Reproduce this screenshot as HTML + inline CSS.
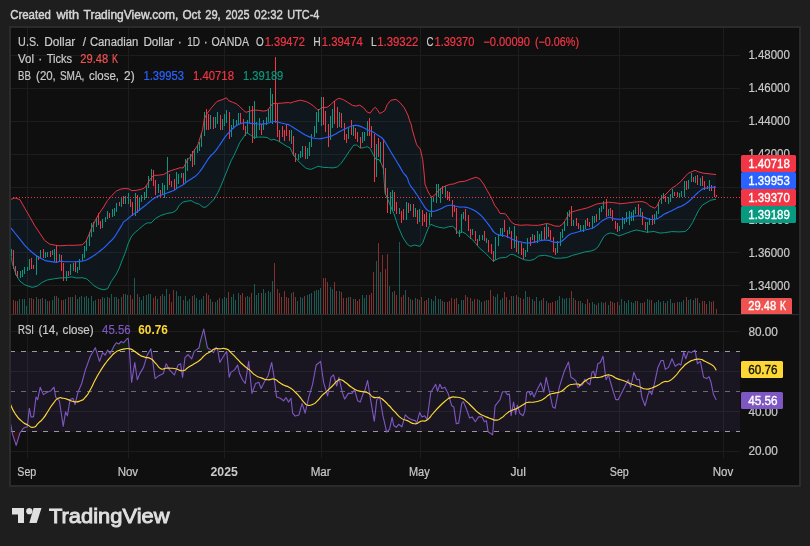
<!DOCTYPE html>
<html lang="en"><head><meta charset="utf-8"><title>USDCAD chart</title>
<style>html,body{margin:0;padding:0;background:#1e1e1e;overflow:hidden}svg{display:block;will-change:transform}</style></head>
<body>
<svg width="810" height="546" viewBox="0 0 810 546" font-family="'Liberation Sans', sans-serif" font-size="12">
<rect width="810" height="546" fill="#1e1e1e"/>
<rect x="9" y="26" width="792" height="461" fill="#2b2b2b"/>
<rect x="11" y="28" width="788" height="457" fill="#0f0f0f"/>
<g fill="#1d1d1d" shape-rendering="crispEdges">
<rect x="27" y="28" width="1" height="430"/>
<rect x="128" y="28" width="1" height="430"/>
<rect x="224" y="28" width="1" height="430"/>
<rect x="321" y="28" width="1" height="430"/>
<rect x="420" y="28" width="1" height="430"/>
<rect x="518" y="28" width="1" height="430"/>
<rect x="619" y="28" width="1" height="430"/>
<rect x="723" y="28" width="1" height="430"/>
<rect x="11" y="55" width="729" height="1"/>
<rect x="11" y="88" width="729" height="1"/>
<rect x="11" y="121" width="729" height="1"/>
<rect x="11" y="154" width="729" height="1"/>
<rect x="11" y="187" width="729" height="1"/>
<rect x="11" y="219" width="729" height="1"/>
<rect x="11" y="252" width="729" height="1"/>
<rect x="11" y="285" width="729" height="1"/>
<rect x="11" y="331" width="729" height="1"/>
<rect x="11" y="371" width="729" height="1"/>
<rect x="11" y="411" width="729" height="1"/>
<rect x="11" y="451" width="729" height="1"/>
</g>
<rect x="11" y="351.5" width="729" height="80" fill="#7e57c2" fill-opacity="0.1"/>
<path d="M10.0,199.6 L14.9,197.9 L19.9,199.6 L24.8,208.3 L29.8,216.9 L34.7,225.6 L39.7,233.0 L44.6,240.4 L49.6,244.1 L55.7,245.3 L60.0,245.8 L67.4,245.3 L74.8,245.3 L82.2,244.8 L86.0,241.3 L88.9,234.7 L91.9,227.2 L95.6,219.8 L99.3,213.2 L103.0,208.0 L107.4,200.6 L111.9,195.4 L116.3,191.0 L120.8,189.1 L125.2,188.5 L128.9,188.8 L131.9,190.7 L137.1,190.2 L141.5,189.2 L144.5,188.0 L147.5,183.9 L149.7,179.9 L151.9,176.9 L154.1,175.4 L159.3,175.1 L163.8,174.4 L167.5,172.1 L171.2,170.5 L175.6,169.2 L180.1,167.7 L183.1,168.0 L185.3,164.3 L187.5,159.8 L190.5,156.9 L192.7,153.2 L194.9,149.4 L197.9,145.0 L202.7,129.2 L204.3,118.6 L207.2,113.4 L211.7,107.4 L216.9,101.5 L222.1,99.7 L226.5,97.8 L228.8,100.8 L232.5,102.2 L236.2,103.7 L239.9,106.7 L243.6,110.4 L246.1,112.3 L250.3,110.9 L254.7,110.1 L259.2,110.4 L263.6,111.1 L267.3,110.4 L270.3,106.7 L272.5,103.7 L277.0,103.4 L282.9,103.0 L288.8,102.5 L290.0,103.1 L294.4,101.6 L300.4,100.2 L306.3,101.6 L310.8,103.9 L314.5,106.8 L318.2,110.5 L321.9,107.6 L327.1,107.3 L330.8,104.6 L334.5,100.9 L338.9,98.2 L343.4,99.7 L347.8,102.4 L352.3,105.3 L356.0,106.1 L359.7,105.1 L363.4,107.6 L367.1,112.0 L370.1,113.2 L373.1,109.1 L375.3,107.3 L377.5,109.8 L379.7,113.5 L382.7,112.0 L384.9,110.5 L387.2,104.6 L390.9,100.2 L396.1,99.4 L399.8,102.4 L404.2,107.6 L407.9,115.0 L410.0,121.7 L411.2,124.3 L412.3,130.0 L414.5,137.4 L416.7,144.8 L420.4,149.3 L422.7,159.7 L424.1,173.0 L425.0,184.0 L427.3,189.9 L429.5,194.4 L431.7,197.1 L434.7,195.1 L438.4,190.7 L442.1,187.7 L445.8,185.8 L450.3,184.3 L453.1,184.1 L459.0,181.9 L464.9,181.2 L470.9,178.9 L476.1,177.2 L479.8,178.9 L483.6,184.0 L487.3,190.7 L491.1,197.3 L494.8,205.5 L497.7,209.2 L500.0,213.4 L505.2,213.7 L508.2,217.4 L511.1,221.9 L514.8,224.4 L520.8,225.3 L526.7,224.9 L532.6,225.3 L538.6,225.3 L543.0,224.4 L546.7,223.4 L550.4,224.4 L554.9,226.0 L559.3,226.3 L562.3,224.4 L565.3,220.4 L568.2,215.2 L571.2,212.2 L575.6,210.8 L581.6,209.3 L587.5,207.8 L592.0,206.0 L596.4,204.1 L600.9,203.3 L603.8,203.1 L608.3,202.2 L612.7,202.6 L617.2,203.1 L619.1,203.5 L620.0,203.8 L627.4,203.0 L634.8,202.0 L642.2,201.5 L646.7,203.0 L649.7,206.0 L654.9,208.2 L657.1,206.0 L660.0,199.3 L664.5,195.6 L668.9,191.1 L671.9,188.2 L676.4,185.2 L680.8,181.5 L685.3,176.3 L688.2,173.3 L691.9,171.6 L694.9,170.4 L698.6,171.9 L703.1,173.1 L709.0,173.8 L715.7,174.5 L715.7,199.3 L710.5,200.3 L706.0,203.0 L702.3,205.2 L698.6,210.4 L695.6,216.4 L692.7,222.3 L689.0,228.2 L685.3,231.5 L679.3,231.9 L671.9,231.6 L664.5,232.7 L660.0,233.1 L654.1,231.5 L646.7,232.2 L640.8,230.9 L636.3,230.0 L631.9,231.2 L625.9,233.4 L620.0,235.6 L619.1,235.9 L614.2,233.8 L610.5,233.0 L606.8,234.2 L603.8,236.7 L600.9,241.9 L597.9,247.1 L594.9,249.6 L590.5,251.1 L584.5,252.0 L578.6,253.8 L572.7,255.3 L566.7,257.5 L560.8,258.2 L554.9,258.2 L550.4,256.4 L544.5,255.3 L538.6,256.0 L534.1,259.4 L529.7,260.5 L523.7,259.7 L517.8,256.7 L513.3,254.5 L510.4,254.5 L505.9,257.5 L500.0,257.9 L497.7,258.9 L493.3,261.1 L488.8,256.7 L484.4,252.2 L479.9,248.5 L475.5,243.3 L472.5,239.6 L469.5,237.4 L465.8,233.7 L462.1,231.8 L459.2,233.7 L456.9,231.5 L454.7,227.8 L452.5,226.3 L448.8,226.7 L444.3,228.1 L439.9,227.5 L435.4,226.3 L431.0,224.3 L428.8,227.0 L425.8,234.4 L422.8,242.6 L419.9,246.3 L414.7,245.1 L410.2,246.3 L407.2,244.1 L402.8,237.4 L398.3,227.0 L393.9,213.7 L389.4,203.3 L385.0,192.9 L383.4,169.1 L381.2,163.2 L379.0,159.5 L376.0,159.5 L373.1,154.3 L370.1,148.4 L367.1,146.6 L364.2,147.6 L360.5,148.1 L356.7,145.1 L353.8,145.1 L349.3,151.3 L344.9,158.0 L341.2,163.2 L337.5,166.9 L333.0,167.9 L328.6,167.6 L322.6,167.3 L318.2,166.2 L315.2,167.6 L310.8,169.4 L306.3,168.4 L301.9,164.7 L297.4,160.2 L293.0,154.3 L290.0,147.6 L287.3,146.7 L282.9,143.8 L278.4,141.1 L274.0,139.3 L271.0,140.1 L267.3,137.5 L262.9,137.1 L258.4,137.1 L254.0,137.5 L250.3,134.9 L246.6,132.7 L243.6,137.1 L239.9,142.3 L236.9,149.0 L233.9,155.6 L231.0,161.0 L220.0,188.0 L217.9,192.5 L214.2,199.1 L209.8,203.6 L206.1,207.0 L203.1,207.3 L199.4,204.3 L194.9,202.8 L191.2,200.6 L187.5,201.1 L183.1,202.1 L179.4,205.1 L176.4,210.3 L172.7,212.5 L166.7,213.5 L160.8,215.5 L155.6,218.4 L151.2,222.9 L147.5,222.9 L144.7,224.3 L138.6,229.5 L134.2,233.2 L131.2,236.9 L128.2,243.6 L125.3,252.5 L122.3,259.9 L119.3,268.0 L116.4,274.0 L111.9,280.6 L111.4,281.2 L107.7,288.6 L103.9,289.8 L99.0,288.6 L94.1,285.8 L90.4,282.1 L86.7,278.9 L82.2,277.7 L76.3,278.0 L71.9,276.9 L65.9,277.7 L60.0,278.0 L54.5,278.7 L47.1,280.0 L42.1,282.4 L37.2,286.1 L32.2,287.4 L24.8,284.9 L19.9,281.2 L16.2,275.0 L12.5,263.9 L10.0,250.3Z" fill="#2196f3" fill-opacity="0.06"/>
<rect x="11" y="314" width="788" height="1" fill="#2e2e2e" shape-rendering="crispEdges"/>
<clipPath id="cm"><rect x="11" y="28" width="729" height="286"/></clipPath>
<clipPath id="cr"><rect x="11" y="315" width="729" height="143"/></clipPath>
<g clip-path="url(#cm)" shape-rendering="crispEdges">
<g fill="#26a69a" fill-opacity="0.5"><rect x="10" y="300" width="1" height="14"/><rect x="19" y="299" width="1" height="15"/><rect x="22" y="299" width="1" height="15"/><rect x="24" y="299" width="1" height="15"/><rect x="26" y="306" width="1" height="8"/><rect x="29" y="298" width="1" height="16"/><rect x="36" y="297" width="1" height="17"/><rect x="40" y="299" width="1" height="15"/><rect x="45" y="299" width="1" height="15"/><rect x="47" y="301" width="1" height="13"/><rect x="52" y="300" width="1" height="14"/><rect x="54" y="296" width="1" height="18"/><rect x="58" y="298" width="1" height="16"/><rect x="65" y="299" width="1" height="15"/><rect x="70" y="297" width="1" height="17"/><rect x="72" y="297" width="1" height="17"/><rect x="77" y="299" width="1" height="15"/><rect x="79" y="297" width="1" height="17"/><rect x="81" y="296" width="1" height="18"/><rect x="84" y="297" width="1" height="17"/><rect x="86" y="296" width="1" height="18"/><rect x="88" y="298" width="1" height="16"/><rect x="91" y="296" width="1" height="18"/><rect x="93" y="301" width="1" height="13"/><rect x="95" y="300" width="1" height="14"/><rect x="102" y="297" width="1" height="17"/><rect x="104" y="298" width="1" height="16"/><rect x="107" y="297" width="1" height="17"/><rect x="111" y="294" width="1" height="20"/><rect x="114" y="297" width="1" height="17"/><rect x="116" y="297" width="1" height="17"/><rect x="121" y="297" width="1" height="17"/><rect x="125" y="294" width="1" height="20"/><rect x="127" y="295" width="1" height="19"/><rect x="134" y="278" width="1" height="36"/><rect x="139" y="297" width="1" height="17"/><rect x="141" y="300" width="1" height="14"/><rect x="143" y="296" width="1" height="18"/><rect x="146" y="295" width="1" height="19"/><rect x="148" y="294" width="1" height="20"/><rect x="150" y="294" width="1" height="20"/><rect x="157" y="299" width="1" height="15"/><rect x="162" y="294" width="1" height="20"/><rect x="164" y="296" width="1" height="18"/><rect x="166" y="289" width="1" height="25"/><rect x="176" y="291" width="1" height="23"/><rect x="178" y="296" width="1" height="18"/><rect x="180" y="296" width="1" height="18"/><rect x="185" y="296" width="1" height="18"/><rect x="187" y="301" width="1" height="13"/><rect x="189" y="299" width="1" height="15"/><rect x="194" y="295" width="1" height="19"/><rect x="196" y="298" width="1" height="16"/><rect x="199" y="300" width="1" height="14"/><rect x="201" y="299" width="1" height="15"/><rect x="203" y="296" width="1" height="18"/><rect x="210" y="299" width="1" height="15"/><rect x="215" y="302" width="1" height="12"/><rect x="217" y="300" width="1" height="14"/><rect x="222" y="299" width="1" height="15"/><rect x="224" y="297" width="1" height="17"/><rect x="226" y="298" width="1" height="16"/><rect x="231" y="297" width="1" height="17"/><rect x="233" y="294" width="1" height="20"/><rect x="235" y="300" width="1" height="14"/><rect x="238" y="293" width="1" height="21"/><rect x="247" y="296" width="1" height="18"/><rect x="249" y="297" width="1" height="17"/><rect x="254" y="284" width="1" height="30"/><rect x="256" y="295" width="1" height="19"/><rect x="258" y="293" width="1" height="21"/><rect x="263" y="289" width="1" height="25"/><rect x="265" y="293" width="1" height="21"/><rect x="268" y="291" width="1" height="23"/><rect x="270" y="292" width="1" height="22"/><rect x="272" y="281" width="1" height="33"/><rect x="291" y="293" width="1" height="21"/><rect x="297" y="301" width="1" height="13"/><rect x="300" y="297" width="1" height="17"/><rect x="302" y="298" width="1" height="16"/><rect x="307" y="295" width="1" height="19"/><rect x="309" y="294" width="1" height="20"/><rect x="311" y="293" width="1" height="21"/><rect x="314" y="291" width="1" height="23"/><rect x="316" y="290" width="1" height="24"/><rect x="318" y="290" width="1" height="24"/><rect x="320" y="288" width="1" height="26"/><rect x="330" y="287" width="1" height="27"/><rect x="332" y="289" width="1" height="25"/><rect x="339" y="291" width="1" height="23"/><rect x="348" y="297" width="1" height="17"/><rect x="353" y="299" width="1" height="15"/><rect x="362" y="295" width="1" height="19"/><rect x="364" y="298" width="1" height="16"/><rect x="366" y="295" width="1" height="19"/><rect x="376" y="261" width="1" height="53"/><rect x="380" y="272" width="1" height="42"/><rect x="389" y="286" width="1" height="28"/><rect x="392" y="292" width="1" height="22"/><rect x="399" y="242" width="1" height="72"/><rect x="405" y="290" width="1" height="24"/><rect x="410" y="299" width="1" height="15"/><rect x="415" y="298" width="1" height="16"/><rect x="419" y="300" width="1" height="14"/><rect x="428" y="298" width="1" height="16"/><rect x="431" y="299" width="1" height="15"/><rect x="433" y="301" width="1" height="13"/><rect x="435" y="296" width="1" height="18"/><rect x="438" y="299" width="1" height="15"/><rect x="440" y="299" width="1" height="15"/><rect x="444" y="302" width="1" height="12"/><rect x="458" y="304" width="1" height="10"/><rect x="461" y="300" width="1" height="14"/><rect x="463" y="300" width="1" height="14"/><rect x="472" y="301" width="1" height="13"/><rect x="479" y="300" width="1" height="14"/><rect x="481" y="302" width="1" height="12"/><rect x="486" y="300" width="1" height="14"/><rect x="495" y="297" width="1" height="17"/><rect x="497" y="294" width="1" height="20"/><rect x="500" y="300" width="1" height="14"/><rect x="502" y="298" width="1" height="16"/><rect x="509" y="300" width="1" height="14"/><rect x="513" y="296" width="1" height="18"/><rect x="518" y="297" width="1" height="17"/><rect x="525" y="291" width="1" height="23"/><rect x="527" y="297" width="1" height="17"/><rect x="532" y="299" width="1" height="15"/><rect x="536" y="297" width="1" height="17"/><rect x="539" y="301" width="1" height="13"/><rect x="541" y="300" width="1" height="14"/><rect x="546" y="301" width="1" height="13"/><rect x="557" y="300" width="1" height="14"/><rect x="559" y="296" width="1" height="18"/><rect x="562" y="298" width="1" height="16"/><rect x="564" y="299" width="1" height="15"/><rect x="566" y="298" width="1" height="16"/><rect x="569" y="298" width="1" height="16"/><rect x="573" y="298" width="1" height="16"/><rect x="580" y="301" width="1" height="13"/><rect x="582" y="303" width="1" height="11"/><rect x="585" y="304" width="1" height="10"/><rect x="592" y="302" width="1" height="12"/><rect x="594" y="304" width="1" height="10"/><rect x="598" y="303" width="1" height="11"/><rect x="601" y="302" width="1" height="12"/><rect x="603" y="303" width="1" height="11"/><rect x="608" y="305" width="1" height="9"/><rect x="619" y="305" width="1" height="9"/><rect x="621" y="299" width="1" height="15"/><rect x="624" y="301" width="1" height="13"/><rect x="626" y="303" width="1" height="11"/><rect x="628" y="300" width="1" height="14"/><rect x="631" y="302" width="1" height="12"/><rect x="633" y="303" width="1" height="11"/><rect x="635" y="301" width="1" height="13"/><rect x="640" y="303" width="1" height="11"/><rect x="647" y="299" width="1" height="15"/><rect x="649" y="300" width="1" height="14"/><rect x="654" y="303" width="1" height="11"/><rect x="656" y="302" width="1" height="12"/><rect x="658" y="300" width="1" height="14"/><rect x="660" y="302" width="1" height="12"/><rect x="663" y="301" width="1" height="13"/><rect x="667" y="301" width="1" height="13"/><rect x="670" y="299" width="1" height="15"/><rect x="672" y="303" width="1" height="11"/><rect x="679" y="302" width="1" height="12"/><rect x="681" y="302" width="1" height="12"/><rect x="683" y="300" width="1" height="14"/><rect x="688" y="300" width="1" height="14"/><rect x="690" y="299" width="1" height="15"/><rect x="695" y="298" width="1" height="16"/><rect x="699" y="303" width="1" height="11"/><rect x="709" y="301" width="1" height="13"/></g>
<g fill="#ef5350" fill-opacity="0.5"><rect x="13" y="300" width="1" height="14"/><rect x="15" y="301" width="1" height="13"/><rect x="17" y="301" width="1" height="13"/><rect x="31" y="298" width="1" height="16"/><rect x="33" y="299" width="1" height="15"/><rect x="38" y="299" width="1" height="15"/><rect x="42" y="298" width="1" height="16"/><rect x="49" y="301" width="1" height="13"/><rect x="56" y="296" width="1" height="18"/><rect x="61" y="300" width="1" height="14"/><rect x="63" y="300" width="1" height="14"/><rect x="68" y="297" width="1" height="17"/><rect x="75" y="295" width="1" height="19"/><rect x="98" y="299" width="1" height="15"/><rect x="100" y="299" width="1" height="15"/><rect x="109" y="298" width="1" height="16"/><rect x="118" y="299" width="1" height="15"/><rect x="123" y="294" width="1" height="20"/><rect x="130" y="295" width="1" height="19"/><rect x="132" y="299" width="1" height="15"/><rect x="137" y="294" width="1" height="20"/><rect x="153" y="298" width="1" height="16"/><rect x="155" y="296" width="1" height="18"/><rect x="160" y="296" width="1" height="18"/><rect x="169" y="294" width="1" height="20"/><rect x="171" y="302" width="1" height="12"/><rect x="173" y="290" width="1" height="24"/><rect x="183" y="300" width="1" height="14"/><rect x="192" y="296" width="1" height="18"/><rect x="206" y="293" width="1" height="21"/><rect x="208" y="295" width="1" height="19"/><rect x="212" y="302" width="1" height="12"/><rect x="219" y="298" width="1" height="16"/><rect x="228" y="292" width="1" height="22"/><rect x="240" y="295" width="1" height="19"/><rect x="242" y="293" width="1" height="21"/><rect x="245" y="297" width="1" height="17"/><rect x="251" y="293" width="1" height="21"/><rect x="261" y="293" width="1" height="21"/><rect x="274" y="263" width="1" height="51"/><rect x="277" y="289" width="1" height="25"/><rect x="279" y="293" width="1" height="21"/><rect x="281" y="297" width="1" height="17"/><rect x="284" y="291" width="1" height="23"/><rect x="286" y="297" width="1" height="17"/><rect x="288" y="298" width="1" height="16"/><rect x="293" y="292" width="1" height="22"/><rect x="295" y="297" width="1" height="17"/><rect x="304" y="296" width="1" height="18"/><rect x="323" y="278" width="1" height="36"/><rect x="325" y="278" width="1" height="36"/><rect x="327" y="282" width="1" height="32"/><rect x="334" y="282" width="1" height="32"/><rect x="336" y="291" width="1" height="23"/><rect x="341" y="292" width="1" height="22"/><rect x="343" y="298" width="1" height="16"/><rect x="346" y="298" width="1" height="16"/><rect x="350" y="297" width="1" height="17"/><rect x="355" y="299" width="1" height="15"/><rect x="357" y="301" width="1" height="13"/><rect x="359" y="299" width="1" height="15"/><rect x="369" y="295" width="1" height="19"/><rect x="371" y="293" width="1" height="21"/><rect x="373" y="272" width="1" height="42"/><rect x="378" y="243" width="1" height="71"/><rect x="382" y="255" width="1" height="59"/><rect x="385" y="269" width="1" height="45"/><rect x="387" y="254" width="1" height="60"/><rect x="394" y="291" width="1" height="23"/><rect x="396" y="295" width="1" height="19"/><rect x="401" y="297" width="1" height="17"/><rect x="403" y="295" width="1" height="19"/><rect x="408" y="297" width="1" height="17"/><rect x="412" y="300" width="1" height="14"/><rect x="417" y="299" width="1" height="15"/><rect x="421" y="297" width="1" height="17"/><rect x="424" y="301" width="1" height="13"/><rect x="426" y="300" width="1" height="14"/><rect x="442" y="301" width="1" height="13"/><rect x="447" y="302" width="1" height="12"/><rect x="449" y="301" width="1" height="13"/><rect x="451" y="298" width="1" height="16"/><rect x="454" y="299" width="1" height="15"/><rect x="456" y="298" width="1" height="16"/><rect x="465" y="295" width="1" height="19"/><rect x="467" y="297" width="1" height="17"/><rect x="470" y="298" width="1" height="16"/><rect x="474" y="299" width="1" height="15"/><rect x="477" y="299" width="1" height="15"/><rect x="484" y="301" width="1" height="13"/><rect x="488" y="300" width="1" height="14"/><rect x="490" y="290" width="1" height="24"/><rect x="493" y="296" width="1" height="18"/><rect x="504" y="292" width="1" height="22"/><rect x="506" y="297" width="1" height="17"/><rect x="511" y="296" width="1" height="18"/><rect x="516" y="295" width="1" height="19"/><rect x="520" y="298" width="1" height="16"/><rect x="523" y="299" width="1" height="15"/><rect x="529" y="297" width="1" height="17"/><rect x="534" y="301" width="1" height="13"/><rect x="543" y="298" width="1" height="16"/><rect x="548" y="303" width="1" height="11"/><rect x="550" y="303" width="1" height="11"/><rect x="552" y="302" width="1" height="12"/><rect x="555" y="301" width="1" height="13"/><rect x="571" y="291" width="1" height="23"/><rect x="575" y="300" width="1" height="14"/><rect x="578" y="301" width="1" height="13"/><rect x="587" y="299" width="1" height="15"/><rect x="589" y="303" width="1" height="11"/><rect x="596" y="305" width="1" height="9"/><rect x="605" y="302" width="1" height="12"/><rect x="610" y="301" width="1" height="13"/><rect x="612" y="302" width="1" height="12"/><rect x="614" y="303" width="1" height="11"/><rect x="617" y="302" width="1" height="12"/><rect x="637" y="301" width="1" height="13"/><rect x="642" y="303" width="1" height="11"/><rect x="644" y="302" width="1" height="12"/><rect x="651" y="300" width="1" height="14"/><rect x="665" y="303" width="1" height="11"/><rect x="674" y="303" width="1" height="11"/><rect x="677" y="302" width="1" height="12"/><rect x="686" y="297" width="1" height="17"/><rect x="693" y="300" width="1" height="14"/><rect x="697" y="298" width="1" height="16"/><rect x="702" y="301" width="1" height="13"/><rect x="704" y="301" width="1" height="13"/><rect x="706" y="304" width="1" height="10"/><rect x="711" y="302" width="1" height="12"/><rect x="713" y="301" width="1" height="13"/><rect x="716" y="309" width="1" height="5"/></g>
<g fill="#089981"><rect x="11" y="249" width="1" height="7"/><rect x="20" y="271" width="1" height="7"/><rect x="22" y="270" width="1" height="7"/><rect x="24" y="267" width="1" height="7"/><rect x="27" y="267" width="1" height="4"/><rect x="29" y="259" width="1" height="11"/><rect x="36" y="255" width="1" height="20"/><rect x="40" y="250" width="1" height="8"/><rect x="45" y="252" width="1" height="6"/><rect x="47" y="252" width="1" height="5"/><rect x="52" y="250" width="1" height="5"/><rect x="54" y="249" width="1" height="13"/><rect x="59" y="254" width="1" height="7"/><rect x="66" y="271" width="1" height="10"/><rect x="70" y="264" width="1" height="11"/><rect x="73" y="263" width="1" height="8"/><rect x="77" y="267" width="1" height="6"/><rect x="79" y="259" width="1" height="11"/><rect x="82" y="254" width="1" height="7"/><rect x="84" y="246" width="1" height="12"/><rect x="86" y="240" width="1" height="11"/><rect x="89" y="232" width="1" height="14"/><rect x="91" y="223" width="1" height="14"/><rect x="93" y="222" width="1" height="10"/><rect x="96" y="218" width="1" height="9"/><rect x="102" y="219" width="1" height="9"/><rect x="105" y="217" width="1" height="5"/><rect x="107" y="211" width="1" height="8"/><rect x="112" y="209" width="1" height="8"/><rect x="114" y="208" width="1" height="8"/><rect x="116" y="203" width="1" height="9"/><rect x="121" y="198" width="1" height="9"/><rect x="125" y="196" width="1" height="8"/><rect x="128" y="193" width="1" height="11"/><rect x="135" y="193" width="1" height="23"/><rect x="139" y="198" width="1" height="13"/><rect x="141" y="195" width="1" height="7"/><rect x="144" y="192" width="1" height="8"/><rect x="146" y="186" width="1" height="12"/><rect x="148" y="176" width="1" height="12"/><rect x="151" y="169" width="1" height="12"/><rect x="158" y="184" width="1" height="9"/><rect x="162" y="183" width="1" height="11"/><rect x="164" y="185" width="1" height="13"/><rect x="167" y="157" width="1" height="33"/><rect x="176" y="172" width="1" height="17"/><rect x="178" y="174" width="1" height="10"/><rect x="181" y="173" width="1" height="5"/><rect x="185" y="159" width="1" height="24"/><rect x="187" y="158" width="1" height="13"/><rect x="190" y="154" width="1" height="7"/><rect x="194" y="149" width="1" height="16"/><rect x="197" y="145" width="1" height="8"/><rect x="199" y="142" width="1" height="9"/><rect x="201" y="133" width="1" height="14"/><rect x="204" y="112" width="1" height="24"/><rect x="210" y="115" width="1" height="14"/><rect x="215" y="117" width="1" height="11"/><rect x="217" y="112" width="1" height="12"/><rect x="222" y="119" width="1" height="11"/><rect x="224" y="114" width="1" height="12"/><rect x="226" y="110" width="1" height="13"/><rect x="231" y="125" width="1" height="12"/><rect x="233" y="119" width="1" height="10"/><rect x="236" y="120" width="1" height="6"/><rect x="238" y="113" width="1" height="11"/><rect x="247" y="120" width="1" height="13"/><rect x="249" y="106" width="1" height="17"/><rect x="254" y="101" width="1" height="38"/><rect x="256" y="122" width="1" height="15"/><rect x="259" y="118" width="1" height="12"/><rect x="263" y="120" width="1" height="10"/><rect x="266" y="117" width="1" height="8"/><rect x="268" y="109" width="1" height="13"/><rect x="270" y="88" width="1" height="34"/><rect x="272" y="94" width="1" height="30"/><rect x="291" y="130" width="1" height="14"/><rect x="298" y="154" width="1" height="6"/><rect x="300" y="151" width="1" height="7"/><rect x="302" y="146" width="1" height="11"/><rect x="307" y="148" width="1" height="11"/><rect x="309" y="142" width="1" height="14"/><rect x="311" y="134" width="1" height="13"/><rect x="314" y="126" width="1" height="11"/><rect x="316" y="112" width="1" height="21"/><rect x="318" y="109" width="1" height="13"/><rect x="321" y="97" width="1" height="29"/><rect x="330" y="116" width="1" height="24"/><rect x="332" y="109" width="1" height="19"/><rect x="339" y="112" width="1" height="15"/><rect x="348" y="128" width="1" height="11"/><rect x="353" y="125" width="1" height="11"/><rect x="362" y="132" width="1" height="11"/><rect x="364" y="132" width="1" height="9"/><rect x="367" y="121" width="1" height="15"/><rect x="376" y="144" width="1" height="33"/><rect x="380" y="142" width="1" height="21"/><rect x="390" y="192" width="1" height="22"/><rect x="392" y="190" width="1" height="21"/><rect x="399" y="208" width="1" height="6"/><rect x="406" y="202" width="1" height="18"/><rect x="410" y="204" width="1" height="7"/><rect x="415" y="208" width="1" height="9"/><rect x="419" y="209" width="1" height="13"/><rect x="429" y="213" width="1" height="12"/><rect x="431" y="197" width="1" height="20"/><rect x="433" y="197" width="1" height="5"/><rect x="436" y="184" width="1" height="19"/><rect x="438" y="184" width="1" height="13"/><rect x="440" y="188" width="1" height="15"/><rect x="445" y="186" width="1" height="11"/><rect x="459" y="230" width="1" height="7"/><rect x="461" y="214" width="1" height="19"/><rect x="463" y="212" width="1" height="7"/><rect x="472" y="229" width="1" height="6"/><rect x="479" y="235" width="1" height="6"/><rect x="482" y="235" width="1" height="5"/><rect x="486" y="238" width="1" height="5"/><rect x="495" y="237" width="1" height="23"/><rect x="498" y="234" width="1" height="12"/><rect x="500" y="228" width="1" height="7"/><rect x="502" y="228" width="1" height="9"/><rect x="509" y="227" width="1" height="7"/><rect x="514" y="226" width="1" height="22"/><rect x="518" y="241" width="1" height="13"/><rect x="525" y="250" width="1" height="7"/><rect x="527" y="238" width="1" height="14"/><rect x="532" y="234" width="1" height="6"/><rect x="537" y="231" width="1" height="12"/><rect x="539" y="234" width="1" height="6"/><rect x="541" y="231" width="1" height="9"/><rect x="546" y="224" width="1" height="15"/><rect x="557" y="241" width="1" height="12"/><rect x="560" y="232" width="1" height="14"/><rect x="562" y="229" width="1" height="9"/><rect x="564" y="221" width="1" height="10"/><rect x="567" y="212" width="1" height="14"/><rect x="569" y="210" width="1" height="7"/><rect x="573" y="220" width="1" height="6"/><rect x="580" y="225" width="1" height="6"/><rect x="583" y="225" width="1" height="7"/><rect x="585" y="220" width="1" height="9"/><rect x="592" y="216" width="1" height="13"/><rect x="594" y="216" width="1" height="7"/><rect x="599" y="208" width="1" height="12"/><rect x="601" y="206" width="1" height="6"/><rect x="603" y="201" width="1" height="8"/><rect x="608" y="209" width="1" height="7"/><rect x="619" y="226" width="1" height="5"/><rect x="622" y="217" width="1" height="12"/><rect x="624" y="219" width="1" height="5"/><rect x="626" y="212" width="1" height="10"/><rect x="629" y="211" width="1" height="14"/><rect x="631" y="212" width="1" height="9"/><rect x="633" y="210" width="1" height="11"/><rect x="635" y="207" width="1" height="7"/><rect x="640" y="208" width="1" height="8"/><rect x="647" y="222" width="1" height="11"/><rect x="649" y="218" width="1" height="7"/><rect x="654" y="214" width="1" height="10"/><rect x="656" y="211" width="1" height="8"/><rect x="658" y="202" width="1" height="12"/><rect x="661" y="195" width="1" height="9"/><rect x="663" y="193" width="1" height="6"/><rect x="668" y="197" width="1" height="7"/><rect x="670" y="194" width="1" height="8"/><rect x="672" y="189" width="1" height="9"/><rect x="679" y="193" width="1" height="5"/><rect x="681" y="191" width="1" height="6"/><rect x="684" y="181" width="1" height="16"/><rect x="688" y="180" width="1" height="9"/><rect x="691" y="173" width="1" height="9"/><rect x="695" y="176" width="1" height="7"/><rect x="700" y="178" width="1" height="8"/><rect x="709" y="180" width="1" height="11"/></g>
<g fill="#f23645"><rect x="13" y="250" width="1" height="19"/><rect x="15" y="266" width="1" height="9"/><rect x="17" y="271" width="1" height="7"/><rect x="31" y="258" width="1" height="11"/><rect x="33" y="265" width="1" height="4"/><rect x="38" y="256" width="1" height="4"/><rect x="43" y="249" width="1" height="9"/><rect x="50" y="251" width="1" height="6"/><rect x="56" y="245" width="1" height="18"/><rect x="61" y="255" width="1" height="16"/><rect x="63" y="263" width="1" height="18"/><rect x="68" y="271" width="1" height="5"/><rect x="75" y="262" width="1" height="10"/><rect x="98" y="213" width="1" height="12"/><rect x="100" y="221" width="1" height="8"/><rect x="109" y="213" width="1" height="5"/><rect x="119" y="202" width="1" height="4"/><rect x="123" y="196" width="1" height="8"/><rect x="130" y="199" width="1" height="8"/><rect x="132" y="202" width="1" height="14"/><rect x="137" y="195" width="1" height="18"/><rect x="153" y="170" width="1" height="16"/><rect x="155" y="180" width="1" height="15"/><rect x="160" y="190" width="1" height="8"/><rect x="169" y="174" width="1" height="11"/><rect x="171" y="181" width="1" height="6"/><rect x="174" y="179" width="1" height="11"/><rect x="183" y="173" width="1" height="12"/><rect x="192" y="151" width="1" height="16"/><rect x="206" y="109" width="1" height="21"/><rect x="208" y="114" width="1" height="16"/><rect x="213" y="117" width="1" height="12"/><rect x="220" y="115" width="1" height="15"/><rect x="229" y="112" width="1" height="27"/><rect x="240" y="113" width="1" height="11"/><rect x="243" y="119" width="1" height="11"/><rect x="245" y="126" width="1" height="10"/><rect x="252" y="106" width="1" height="37"/><rect x="261" y="124" width="1" height="11"/><rect x="275" y="57" width="1" height="66"/><rect x="277" y="104" width="1" height="33"/><rect x="279" y="130" width="1" height="12"/><rect x="282" y="126" width="1" height="11"/><rect x="284" y="130" width="1" height="11"/><rect x="286" y="124" width="1" height="12"/><rect x="289" y="130" width="1" height="11"/><rect x="293" y="136" width="1" height="20"/><rect x="295" y="153" width="1" height="9"/><rect x="305" y="146" width="1" height="13"/><rect x="323" y="97" width="1" height="28"/><rect x="325" y="111" width="1" height="21"/><rect x="328" y="124" width="1" height="23"/><rect x="334" y="101" width="1" height="23"/><rect x="337" y="107" width="1" height="21"/><rect x="341" y="113" width="1" height="15"/><rect x="344" y="123" width="1" height="17"/><rect x="346" y="134" width="1" height="9"/><rect x="351" y="120" width="1" height="15"/><rect x="355" y="128" width="1" height="11"/><rect x="357" y="132" width="1" height="10"/><rect x="360" y="137" width="1" height="11"/><rect x="369" y="118" width="1" height="18"/><rect x="371" y="126" width="1" height="22"/><rect x="374" y="134" width="1" height="48"/><rect x="378" y="138" width="1" height="19"/><rect x="383" y="140" width="1" height="34"/><rect x="385" y="168" width="1" height="27"/><rect x="387" y="188" width="1" height="25"/><rect x="394" y="192" width="1" height="19"/><rect x="396" y="202" width="1" height="12"/><rect x="401" y="211" width="1" height="12"/><rect x="403" y="209" width="1" height="11"/><rect x="408" y="203" width="1" height="10"/><rect x="413" y="204" width="1" height="13"/><rect x="417" y="210" width="1" height="14"/><rect x="422" y="210" width="1" height="16"/><rect x="424" y="214" width="1" height="8"/><rect x="426" y="212" width="1" height="15"/><rect x="442" y="186" width="1" height="8"/><rect x="447" y="191" width="1" height="9"/><rect x="449" y="192" width="1" height="9"/><rect x="452" y="200" width="1" height="17"/><rect x="454" y="205" width="1" height="7"/><rect x="456" y="208" width="1" height="26"/><rect x="465" y="209" width="1" height="12"/><rect x="468" y="215" width="1" height="16"/><rect x="470" y="229" width="1" height="10"/><rect x="475" y="231" width="1" height="10"/><rect x="477" y="239" width="1" height="7"/><rect x="484" y="231" width="1" height="10"/><rect x="488" y="240" width="1" height="12"/><rect x="491" y="244" width="1" height="10"/><rect x="493" y="251" width="1" height="11"/><rect x="504" y="220" width="1" height="12"/><rect x="507" y="230" width="1" height="8"/><rect x="511" y="231" width="1" height="18"/><rect x="516" y="236" width="1" height="16"/><rect x="521" y="243" width="1" height="12"/><rect x="523" y="248" width="1" height="11"/><rect x="530" y="237" width="1" height="9"/><rect x="534" y="235" width="1" height="8"/><rect x="544" y="227" width="1" height="13"/><rect x="548" y="227" width="1" height="10"/><rect x="550" y="230" width="1" height="10"/><rect x="553" y="237" width="1" height="15"/><rect x="555" y="248" width="1" height="7"/><rect x="571" y="206" width="1" height="20"/><rect x="576" y="218" width="1" height="8"/><rect x="578" y="223" width="1" height="6"/><rect x="587" y="218" width="1" height="8"/><rect x="589" y="222" width="1" height="5"/><rect x="596" y="214" width="1" height="8"/><rect x="606" y="199" width="1" height="18"/><rect x="610" y="208" width="1" height="8"/><rect x="612" y="210" width="1" height="11"/><rect x="615" y="221" width="1" height="8"/><rect x="617" y="223" width="1" height="9"/><rect x="638" y="204" width="1" height="11"/><rect x="642" y="212" width="1" height="13"/><rect x="645" y="222" width="1" height="8"/><rect x="652" y="215" width="1" height="10"/><rect x="665" y="196" width="1" height="6"/><rect x="674" y="192" width="1" height="4"/><rect x="677" y="192" width="1" height="5"/><rect x="686" y="181" width="1" height="9"/><rect x="693" y="177" width="1" height="5"/><rect x="697" y="175" width="1" height="10"/><rect x="702" y="176" width="1" height="10"/><rect x="704" y="181" width="1" height="9"/><rect x="707" y="186" width="1" height="3"/><rect x="711" y="185" width="1" height="6"/><rect x="714" y="186" width="1" height="11"/><rect x="716" y="195" width="1" height="2"/></g>
</g>
<g clip-path="url(#cm)" fill="none" stroke-linejoin="round" stroke-linecap="round">
<path d="M10.0,250.3 L12.5,263.9 L16.2,275.0 L19.9,281.2 L24.8,284.9 L32.2,287.4 L37.2,286.1 L42.1,282.4 L47.1,280.0 L54.5,278.7 L60.0,278.0 L65.9,277.7 L71.9,276.9 L76.3,278.0 L82.2,277.7 L86.7,278.9 L90.4,282.1 L94.1,285.8 L99.0,288.6 L103.9,289.8 L107.7,288.6 L111.4,281.2 L111.9,280.6 L116.4,274.0 L119.3,268.0 L122.3,259.9 L125.3,252.5 L128.2,243.6 L131.2,236.9 L134.2,233.2 L138.6,229.5 L144.7,224.3 L147.5,222.9 L151.2,222.9 L155.6,218.4 L160.8,215.5 L166.7,213.5 L172.7,212.5 L176.4,210.3 L179.4,205.1 L183.1,202.1 L187.5,201.1 L191.2,200.6 L194.9,202.8 L199.4,204.3 L203.1,207.3 L206.1,207.0 L209.8,203.6 L214.2,199.1 L217.9,192.5 L220.0,188.0 L231.0,161.0 L233.9,155.6 L236.9,149.0 L239.9,142.3 L243.6,137.1 L246.6,132.7 L250.3,134.9 L254.0,137.5 L258.4,137.1 L262.9,137.1 L267.3,137.5 L271.0,140.1 L274.0,139.3 L278.4,141.1 L282.9,143.8 L287.3,146.7 L290.0,147.6 L293.0,154.3 L297.4,160.2 L301.9,164.7 L306.3,168.4 L310.8,169.4 L315.2,167.6 L318.2,166.2 L322.6,167.3 L328.6,167.6 L333.0,167.9 L337.5,166.9 L341.2,163.2 L344.9,158.0 L349.3,151.3 L353.8,145.1 L356.7,145.1 L360.5,148.1 L364.2,147.6 L367.1,146.6 L370.1,148.4 L373.1,154.3 L376.0,159.5 L379.0,159.5 L381.2,163.2 L383.4,169.1 L385.0,192.9 L389.4,203.3 L393.9,213.7 L398.3,227.0 L402.8,237.4 L407.2,244.1 L410.2,246.3 L414.7,245.1 L419.9,246.3 L422.8,242.6 L425.8,234.4 L428.8,227.0 L431.0,224.3 L435.4,226.3 L439.9,227.5 L444.3,228.1 L448.8,226.7 L452.5,226.3 L454.7,227.8 L456.9,231.5 L459.2,233.7 L462.1,231.8 L465.8,233.7 L469.5,237.4 L472.5,239.6 L475.5,243.3 L479.9,248.5 L484.4,252.2 L488.8,256.7 L493.3,261.1 L497.7,258.9 L500.0,257.9 L505.9,257.5 L510.4,254.5 L513.3,254.5 L517.8,256.7 L523.7,259.7 L529.7,260.5 L534.1,259.4 L538.6,256.0 L544.5,255.3 L550.4,256.4 L554.9,258.2 L560.8,258.2 L566.7,257.5 L572.7,255.3 L578.6,253.8 L584.5,252.0 L590.5,251.1 L594.9,249.6 L597.9,247.1 L600.9,241.9 L603.8,236.7 L606.8,234.2 L610.5,233.0 L614.2,233.8 L619.1,235.9 L620.0,235.6 L625.9,233.4 L631.9,231.2 L636.3,230.0 L640.8,230.9 L646.7,232.2 L654.1,231.5 L660.0,233.1 L664.5,232.7 L671.9,231.6 L679.3,231.9 L685.3,231.5 L689.0,228.2 L692.7,222.3 L695.6,216.4 L698.6,210.4 L702.3,205.2 L706.0,203.0 L710.5,200.3 L715.7,199.3" stroke="#089981" stroke-width="0.95"/>
<path d="M10.0,199.6 L14.9,197.9 L19.9,199.6 L24.8,208.3 L29.8,216.9 L34.7,225.6 L39.7,233.0 L44.6,240.4 L49.6,244.1 L55.7,245.3 L60.0,245.8 L67.4,245.3 L74.8,245.3 L82.2,244.8 L86.0,241.3 L88.9,234.7 L91.9,227.2 L95.6,219.8 L99.3,213.2 L103.0,208.0 L107.4,200.6 L111.9,195.4 L116.3,191.0 L120.8,189.1 L125.2,188.5 L128.9,188.8 L131.9,190.7 L137.1,190.2 L141.5,189.2 L144.5,188.0 L147.5,183.9 L149.7,179.9 L151.9,176.9 L154.1,175.4 L159.3,175.1 L163.8,174.4 L167.5,172.1 L171.2,170.5 L175.6,169.2 L180.1,167.7 L183.1,168.0 L185.3,164.3 L187.5,159.8 L190.5,156.9 L192.7,153.2 L194.9,149.4 L197.9,145.0 L202.7,129.2 L204.3,118.6 L207.2,113.4 L211.7,107.4 L216.9,101.5 L222.1,99.7 L226.5,97.8 L228.8,100.8 L232.5,102.2 L236.2,103.7 L239.9,106.7 L243.6,110.4 L246.1,112.3 L250.3,110.9 L254.7,110.1 L259.2,110.4 L263.6,111.1 L267.3,110.4 L270.3,106.7 L272.5,103.7 L277.0,103.4 L282.9,103.0 L288.8,102.5 L290.0,103.1 L294.4,101.6 L300.4,100.2 L306.3,101.6 L310.8,103.9 L314.5,106.8 L318.2,110.5 L321.9,107.6 L327.1,107.3 L330.8,104.6 L334.5,100.9 L338.9,98.2 L343.4,99.7 L347.8,102.4 L352.3,105.3 L356.0,106.1 L359.7,105.1 L363.4,107.6 L367.1,112.0 L370.1,113.2 L373.1,109.1 L375.3,107.3 L377.5,109.8 L379.7,113.5 L382.7,112.0 L384.9,110.5 L387.2,104.6 L390.9,100.2 L396.1,99.4 L399.8,102.4 L404.2,107.6 L407.9,115.0 L410.0,121.7 L411.2,124.3 L412.3,130.0 L414.5,137.4 L416.7,144.8 L420.4,149.3 L422.7,159.7 L424.1,173.0 L425.0,184.0 L427.3,189.9 L429.5,194.4 L431.7,197.1 L434.7,195.1 L438.4,190.7 L442.1,187.7 L445.8,185.8 L450.3,184.3 L453.1,184.1 L459.0,181.9 L464.9,181.2 L470.9,178.9 L476.1,177.2 L479.8,178.9 L483.6,184.0 L487.3,190.7 L491.1,197.3 L494.8,205.5 L497.7,209.2 L500.0,213.4 L505.2,213.7 L508.2,217.4 L511.1,221.9 L514.8,224.4 L520.8,225.3 L526.7,224.9 L532.6,225.3 L538.6,225.3 L543.0,224.4 L546.7,223.4 L550.4,224.4 L554.9,226.0 L559.3,226.3 L562.3,224.4 L565.3,220.4 L568.2,215.2 L571.2,212.2 L575.6,210.8 L581.6,209.3 L587.5,207.8 L592.0,206.0 L596.4,204.1 L600.9,203.3 L603.8,203.1 L608.3,202.2 L612.7,202.6 L617.2,203.1 L619.1,203.5 L620.0,203.8 L627.4,203.0 L634.8,202.0 L642.2,201.5 L646.7,203.0 L649.7,206.0 L654.9,208.2 L657.1,206.0 L660.0,199.3 L664.5,195.6 L668.9,191.1 L671.9,188.2 L676.4,185.2 L680.8,181.5 L685.3,176.3 L688.2,173.3 L691.9,171.6 L694.9,170.4 L698.6,171.9 L703.1,173.1 L709.0,173.8 L715.7,174.5" stroke="#f23645" stroke-width="0.95"/>
<path d="M10.0,226.8 C11.3,228.5 12.3,229.7 14.9,233.0 C17.6,236.3 17.3,235.9 19.9,239.2 C22.5,242.5 22.2,242.4 24.8,245.3 C27.5,248.3 27.1,247.9 29.8,250.3 C32.4,252.7 32.1,252.5 34.7,254.5 C37.4,256.5 37.0,256.2 39.7,257.7 C42.3,259.2 42.0,259.2 44.6,260.2 C47.2,261.2 46.3,260.9 49.6,261.4 C52.9,261.9 54.2,262.2 57.0,262.2 C59.8,262.1 57.2,261.5 60.0,261.4 C62.8,261.2 63.5,261.6 67.4,261.7 C71.4,261.7 70.9,261.8 74.8,261.7 C78.8,261.5 78.7,261.7 82.2,261.1 C85.8,260.4 85.0,260.6 88.2,259.1 C91.3,257.6 91.0,257.6 94.1,255.4 C97.3,253.3 97.3,253.2 100.0,251.0 C102.8,248.8 102.1,249.4 104.5,247.3 C106.9,245.1 106.6,245.2 108.9,242.8 C111.3,240.4 111.0,241.3 113.4,238.4 C115.8,235.4 115.5,235.5 117.8,231.7 C120.2,227.9 120.7,226.9 122.3,224.3 C123.9,221.7 122.5,223.0 123.7,221.9 C124.9,220.7 124.7,221.5 126.7,219.9 C128.7,218.3 128.4,218.1 131.1,215.9 C133.9,213.7 133.9,214.0 137.1,211.7 C140.2,209.5 140.2,209.5 143.0,207.3 C145.8,205.1 145.1,205.6 147.5,203.6 C149.8,201.6 149.5,201.7 151.9,199.9 C154.3,198.1 153.6,198.3 156.4,196.9 C159.1,195.5 159.1,195.9 162.3,194.7 C165.5,193.5 165.1,193.7 168.2,192.5 C171.4,191.3 171.4,191.6 174.2,190.2 C176.9,188.9 176.2,188.7 178.6,187.3 C181.0,185.8 180.7,186.3 183.1,184.8 C185.4,183.2 185.1,183.0 187.5,181.3 C189.9,179.6 189.6,180.0 192.0,178.4 C194.3,176.8 194.0,177.6 196.4,175.4 C198.8,173.2 198.5,173.4 200.9,170.2 C203.2,167.1 202.9,167.1 205.3,163.5 C207.7,160.0 207.4,159.8 209.8,156.9 C212.1,153.9 211.8,155.2 214.2,152.4 C216.6,149.6 215.8,150.6 218.7,146.5 C221.5,142.4 222.2,141.0 225.0,137.1 C227.9,133.2 227.1,134.5 229.5,131.9 C231.9,129.3 231.6,129.4 233.9,127.5 C236.3,125.5 236.0,125.7 238.4,124.5 C240.8,123.3 240.5,123.5 242.8,123.0 C245.2,122.5 244.9,122.6 247.3,122.7 C249.7,122.8 249.4,123.2 251.7,123.5 C254.1,123.7 253.8,123.6 256.2,123.8 C258.6,123.9 258.3,124.1 260.6,124.1 C263.0,124.1 262.7,124.1 265.1,123.8 C267.5,123.4 267.2,123.3 269.5,122.7 C271.9,122.1 271.8,121.7 274.0,121.5 C276.2,121.3 275.7,121.6 277.7,122.0 C279.7,122.4 279.2,122.5 281.4,123.0 C283.6,123.6 283.6,123.4 285.9,124.1 C288.2,124.7 287.7,124.2 290.0,125.4 C292.3,126.5 291.7,126.6 294.4,128.3 C297.2,130.1 297.2,130.1 300.4,132.0 C303.5,133.9 303.2,134.0 306.3,135.5 C309.5,137.0 309.1,136.8 312.2,137.7 C315.4,138.6 315.0,138.6 318.2,138.7 C321.3,138.8 321.0,138.6 324.1,138.0 C327.3,137.4 327.3,137.4 330.0,136.5 C332.8,135.6 332.1,135.8 334.5,134.6 C336.9,133.4 336.6,133.3 338.9,132.0 C341.3,130.8 341.0,131.0 343.4,129.8 C345.8,128.6 345.5,128.7 347.8,127.6 C350.2,126.5 350.1,126.4 352.3,125.8 C354.5,125.2 354.0,125.3 356.0,125.4 C358.0,125.5 357.5,125.4 359.7,126.1 C361.9,126.8 361.8,126.9 364.2,128.0 C366.5,129.2 366.2,129.2 368.6,130.3 C371.0,131.3 370.7,130.8 373.1,132.0 C375.4,133.3 375.1,133.4 377.5,135.0 C379.9,136.6 380.0,136.2 382.0,138.0 C383.9,139.8 383.3,139.3 384.9,141.7 C386.5,144.1 385.9,143.5 387.9,146.9 C389.9,150.2 390.0,150.3 392.3,154.3 C394.7,158.3 394.4,157.8 396.8,161.7 C399.2,165.7 399.5,166.1 401.2,169.1 C403.0,172.1 401.9,170.8 403.5,173.0 C405.0,175.2 405.5,174.5 407.1,177.5 C408.7,180.4 407.5,180.3 409.5,184.0 C411.5,187.7 412.1,187.7 414.7,191.4 C417.2,195.2 416.9,194.7 419.1,198.1 C421.3,201.5 421.0,201.3 422.8,204.0 C424.6,206.8 424.2,206.6 425.8,208.5 C427.4,210.3 427.0,210.2 428.8,211.0 C430.5,211.8 430.3,211.6 432.5,211.4 C434.6,211.3 434.5,211.2 436.9,210.4 C439.3,209.6 439.0,209.6 441.4,208.5 C443.7,207.4 443.4,207.1 445.8,206.2 C448.2,205.4 447.9,205.3 450.3,205.2 C452.6,205.1 452.3,205.5 454.7,206.0 C457.1,206.4 456.8,206.7 459.2,207.0 C461.5,207.3 461.2,206.8 463.6,207.0 C466.0,207.2 465.7,207.1 468.1,207.7 C470.4,208.4 470.1,208.3 472.5,209.5 C474.9,210.7 474.6,210.5 477.0,212.2 C479.3,213.9 479.0,213.5 481.4,215.9 C483.8,218.3 483.5,218.1 485.9,221.1 C488.2,224.0 488.1,224.0 490.3,227.0 C492.5,230.0 492.0,230.2 494.0,232.2 C496.0,234.2 496.1,233.6 497.7,234.4 C499.3,235.2 498.2,234.9 500.0,235.2 C501.8,235.6 502.1,235.1 504.4,235.7 C506.8,236.3 506.5,236.4 508.9,237.5 C511.3,238.5 511.0,238.7 513.3,239.7 C515.7,240.7 515.4,240.5 517.8,241.2 C520.2,241.8 519.9,241.7 522.2,242.2 C524.6,242.7 524.3,242.8 526.7,243.0 C529.1,243.1 528.8,242.9 531.1,242.7 C533.5,242.4 533.2,242.4 535.6,241.9 C538.0,241.4 537.7,241.2 540.0,240.7 C542.4,240.3 542.1,240.2 544.5,240.1 C546.9,240.1 546.6,240.0 548.9,240.4 C551.3,240.9 551.0,241.4 553.4,241.9 C555.8,242.4 555.7,242.6 557.8,242.4 C560.0,242.2 559.6,242.3 561.6,241.2 C563.5,240.1 563.1,240.0 565.3,238.2 C567.4,236.4 567.3,235.9 569.7,234.5 C572.1,233.1 571.4,233.9 574.2,233.0 C576.9,232.1 576.9,232.1 580.1,231.2 C583.3,230.4 582.9,230.5 586.0,229.8 C589.2,229.0 589.2,229.4 592.0,228.3 C594.7,227.2 594.0,227.3 596.4,225.6 C598.8,223.9 598.5,223.7 600.9,221.9 C603.2,220.1 602.9,220.1 605.3,218.9 C607.7,217.7 607.4,217.4 609.8,217.4 C612.1,217.4 611.5,218.4 614.2,218.9 C616.9,219.4 616.9,219.4 620.0,219.3 C623.1,219.2 622.4,219.4 625.9,218.6 C629.5,217.8 629.8,217.1 633.3,216.4 C636.9,215.7 636.5,215.7 639.3,215.9 C642.1,216.1 641.0,216.2 643.7,217.1 C646.5,218.0 646.5,218.7 649.7,219.3 C652.8,219.9 652.8,219.9 655.6,219.3 C658.4,218.7 657.7,218.5 660.0,217.1 C662.4,215.7 661.7,215.7 664.5,214.1 C667.3,212.6 667.3,212.8 670.4,211.2 C673.6,209.6 673.2,209.7 676.4,208.2 C679.5,206.7 679.5,207.1 682.3,205.7 C685.1,204.3 684.4,204.7 686.7,203.0 C689.1,201.3 688.8,201.5 691.2,199.3 C693.6,197.1 693.3,197.1 695.6,194.9 C698.0,192.6 698.1,192.4 700.1,190.9 C702.1,189.3 701.1,189.7 703.1,188.9 C705.0,188.1 705.1,188.3 707.5,187.9 C709.9,187.5 709.8,187.6 712.0,187.4 C714.1,187.2 714.7,187.2 715.7,187.1" stroke="#2962ff" stroke-width="1.15"/>
</g>
<line x1="13" y1="197.5" x2="740" y2="197.5" stroke="#f23645" stroke-width="1" stroke-dasharray="1 2" shape-rendering="crispEdges"/>
<line x1="11" y1="351.5" x2="740" y2="351.5" stroke="#9a9aa4" stroke-width="1" stroke-dasharray="5 6" stroke-dashoffset="1" shape-rendering="crispEdges"/>
<line x1="11" y1="391.5" x2="740" y2="391.5" stroke="#6a6a72" stroke-width="1" stroke-dasharray="5 6" stroke-dashoffset="1" shape-rendering="crispEdges"/>
<line x1="11" y1="431.5" x2="740" y2="431.5" stroke="#9a9aa4" stroke-width="1" stroke-dasharray="5 6" stroke-dashoffset="1" shape-rendering="crispEdges"/>
<defs><linearGradient id="gob" x1="0" y1="0" x2="0" y2="1" gradientUnits="userSpaceOnUse"><stop offset="0" stop-color="#4caf50" stop-opacity="0"/></linearGradient></defs>
<clipPath id="cob"><rect x="11" y="315" width="729" height="36.5"/></clipPath>
<clipPath id="cos"><rect x="11" y="431.5" width="729" height="27"/></clipPath>
<path d="M10.0,420.6 L12.5,434.2 L16.2,445.3 L19.9,433.0 L23.6,428.0 L27.3,426.8 L29.3,408.2 L31.0,416.9 L33.5,416.9 L36.0,397.1 L37.7,399.6 L40.2,387.2 L43.4,394.6 L47.1,392.2 L50.8,390.9 L54.0,387.2 L55.7,397.1 L59.4,400.8 L60.7,409.5 L63.2,426.3 L65.6,411.9 L67.4,415.7 L70.1,399.6 L73.0,398.3 L75.0,404.5 L78.0,392.2 L81.7,383.5 L85.4,369.9 L90.3,356.3 L95.3,347.7 L99.5,361.3 L102.7,352.6 L105.2,355.1 L107.7,350.1 L110.1,353.8 L113.8,346.4 L116.3,342.7 L118.8,344.0 L121.2,341.5 L123.7,342.7 L126.7,339.0 L128.2,338.3 L129.2,347.7 L131.6,382.3 L134.8,362.5 L137.3,379.8 L139.8,373.6 L143.5,367.4 L147.2,355.1 L150.9,348.9 L152.9,362.5 L155.1,378.6 L158.3,376.1 L163.3,373.6 L166.2,363.7 L169.5,369.9 L174.4,374.9 L178.1,365.0 L180.6,363.7 L182.6,377.3 L185.0,357.6 L188.0,354.6 L191.7,358.8 L194.2,351.4 L199.1,347.7 L200.0,342.7 L203.7,329.1 L207.4,347.7 L211.1,350.1 L213.6,352.6 L216.1,347.2 L217.8,350.1 L219.8,362.5 L223.5,356.3 L226.7,351.4 L229.2,377.3 L230.9,372.4 L234.6,369.9 L237.6,365.0 L239.6,373.6 L242.5,379.8 L245.2,383.5 L248.7,361.3 L251.9,393.4 L255.6,383.5 L258.8,382.3 L261.1,388.5 L264.8,381.0 L268.0,376.1 L271.7,362.5 L273.7,374.9 L276.6,397.1 L280.3,398.3 L283.6,400.8 L286.0,397.6 L288.5,402.1 L291.0,398.3 L292.7,413.2 L295.2,416.1 L298.9,414.9 L302.1,403.3 L305.1,413.2 L308.8,397.1 L312.5,384.7 L316.2,365.0 L320.6,361.3 L323.6,382.3 L327.6,395.9 L331.0,377.3 L333.5,374.9 L336.7,386.0 L338.9,377.3 L342.2,392.2 L344.6,399.1 L348.3,393.4 L352.0,393.4 L354.5,389.7 L357.7,400.8 L360.2,402.1 L363.2,393.4 L365.1,389.7 L367.6,380.5 L370.6,399.6 L374.3,421.3 L376.8,399.6 L379.7,396.6 L382.9,415.7 L386.7,432.2 L389.6,429.2 L392.1,417.4 L393.7,425.5 L396.2,427.3 L398.7,424.3 L401.9,426.8 L405.3,414.9 L408.5,418.1 L412.2,419.9 L415.2,420.6 L416.7,423.1 L419.7,412.4 L422.1,416.9 L424.6,415.7 L427.1,419.4 L430.8,392.2 L435.7,384.3 L437.5,391.4 L439.9,384.3 L441.9,388.5 L444.9,387.2 L448.1,393.4 L451.8,405.8 L453.8,407.0 L456.3,423.8 L458.7,423.1 L461.7,403.3 L463.4,401.6 L466.6,409.5 L469.6,418.1 L472.1,416.9 L475.3,421.8 L478.5,416.9 L482.0,416.9 L484.4,421.8 L486.4,420.6 L488.1,431.7 L492.6,434.9 L495.1,405.8 L500.0,399.6 L502.5,391.7 L505.5,391.7 L507.4,394.6 L509.4,394.1 L511.1,415.7 L513.6,402.1 L515.6,414.4 L517.3,405.0 L519.8,413.2 L523.0,415.7 L524.7,411.4 L526.7,392.2 L529.2,391.7 L530.4,395.1 L532.2,392.2 L534.1,397.1 L537.1,389.7 L540.8,382.8 L543.8,392.2 L546.2,377.3 L549.5,392.2 L552.7,407.0 L555.1,408.2 L559.3,387.2 L564.3,371.2 L568.5,362.0 L571.0,377.3 L574.2,379.3 L575.9,381.0 L577.9,387.7 L580.0,386.0 L582.5,384.7 L584.9,379.3 L587.4,382.8 L589.9,384.7 L591.9,372.4 L593.6,371.2 L595.3,377.3 L597.8,363.7 L600.3,362.5 L603.0,356.3 L606.0,379.8 L608.4,374.9 L610.9,383.5 L613.4,392.2 L615.8,399.6 L618.3,399.6 L622.0,392.2 L625.7,384.7 L628.2,379.8 L630.7,387.2 L633.9,372.4 L636.9,379.8 L639.3,379.3 L641.8,397.1 L645.0,405.8 L648.0,394.6 L650.0,390.9 L651.7,394.6 L654.2,384.7 L657.9,367.4 L661.1,360.5 L663.3,360.5 L665.3,369.4 L668.5,367.4 L672.0,358.8 L675.2,366.2 L678.9,363.7 L680.9,365.0 L683.8,352.1 L685.8,358.8 L688.3,351.4 L691.2,352.6 L695.0,350.1 L697.4,363.7 L700.4,361.3 L703.6,377.3 L706.6,378.6 L709.0,376.8 L711.0,382.3 L713.5,394.6 L716.0,399.6 L716.0,351.5 L10.0,351.5Z" fill="#4caf50" fill-opacity="0.09" clip-path="url(#cob)"/>
<path d="M10.0,420.6 L12.5,434.2 L16.2,445.3 L19.9,433.0 L23.6,428.0 L27.3,426.8 L29.3,408.2 L31.0,416.9 L33.5,416.9 L36.0,397.1 L37.7,399.6 L40.2,387.2 L43.4,394.6 L47.1,392.2 L50.8,390.9 L54.0,387.2 L55.7,397.1 L59.4,400.8 L60.7,409.5 L63.2,426.3 L65.6,411.9 L67.4,415.7 L70.1,399.6 L73.0,398.3 L75.0,404.5 L78.0,392.2 L81.7,383.5 L85.4,369.9 L90.3,356.3 L95.3,347.7 L99.5,361.3 L102.7,352.6 L105.2,355.1 L107.7,350.1 L110.1,353.8 L113.8,346.4 L116.3,342.7 L118.8,344.0 L121.2,341.5 L123.7,342.7 L126.7,339.0 L128.2,338.3 L129.2,347.7 L131.6,382.3 L134.8,362.5 L137.3,379.8 L139.8,373.6 L143.5,367.4 L147.2,355.1 L150.9,348.9 L152.9,362.5 L155.1,378.6 L158.3,376.1 L163.3,373.6 L166.2,363.7 L169.5,369.9 L174.4,374.9 L178.1,365.0 L180.6,363.7 L182.6,377.3 L185.0,357.6 L188.0,354.6 L191.7,358.8 L194.2,351.4 L199.1,347.7 L200.0,342.7 L203.7,329.1 L207.4,347.7 L211.1,350.1 L213.6,352.6 L216.1,347.2 L217.8,350.1 L219.8,362.5 L223.5,356.3 L226.7,351.4 L229.2,377.3 L230.9,372.4 L234.6,369.9 L237.6,365.0 L239.6,373.6 L242.5,379.8 L245.2,383.5 L248.7,361.3 L251.9,393.4 L255.6,383.5 L258.8,382.3 L261.1,388.5 L264.8,381.0 L268.0,376.1 L271.7,362.5 L273.7,374.9 L276.6,397.1 L280.3,398.3 L283.6,400.8 L286.0,397.6 L288.5,402.1 L291.0,398.3 L292.7,413.2 L295.2,416.1 L298.9,414.9 L302.1,403.3 L305.1,413.2 L308.8,397.1 L312.5,384.7 L316.2,365.0 L320.6,361.3 L323.6,382.3 L327.6,395.9 L331.0,377.3 L333.5,374.9 L336.7,386.0 L338.9,377.3 L342.2,392.2 L344.6,399.1 L348.3,393.4 L352.0,393.4 L354.5,389.7 L357.7,400.8 L360.2,402.1 L363.2,393.4 L365.1,389.7 L367.6,380.5 L370.6,399.6 L374.3,421.3 L376.8,399.6 L379.7,396.6 L382.9,415.7 L386.7,432.2 L389.6,429.2 L392.1,417.4 L393.7,425.5 L396.2,427.3 L398.7,424.3 L401.9,426.8 L405.3,414.9 L408.5,418.1 L412.2,419.9 L415.2,420.6 L416.7,423.1 L419.7,412.4 L422.1,416.9 L424.6,415.7 L427.1,419.4 L430.8,392.2 L435.7,384.3 L437.5,391.4 L439.9,384.3 L441.9,388.5 L444.9,387.2 L448.1,393.4 L451.8,405.8 L453.8,407.0 L456.3,423.8 L458.7,423.1 L461.7,403.3 L463.4,401.6 L466.6,409.5 L469.6,418.1 L472.1,416.9 L475.3,421.8 L478.5,416.9 L482.0,416.9 L484.4,421.8 L486.4,420.6 L488.1,431.7 L492.6,434.9 L495.1,405.8 L500.0,399.6 L502.5,391.7 L505.5,391.7 L507.4,394.6 L509.4,394.1 L511.1,415.7 L513.6,402.1 L515.6,414.4 L517.3,405.0 L519.8,413.2 L523.0,415.7 L524.7,411.4 L526.7,392.2 L529.2,391.7 L530.4,395.1 L532.2,392.2 L534.1,397.1 L537.1,389.7 L540.8,382.8 L543.8,392.2 L546.2,377.3 L549.5,392.2 L552.7,407.0 L555.1,408.2 L559.3,387.2 L564.3,371.2 L568.5,362.0 L571.0,377.3 L574.2,379.3 L575.9,381.0 L577.9,387.7 L580.0,386.0 L582.5,384.7 L584.9,379.3 L587.4,382.8 L589.9,384.7 L591.9,372.4 L593.6,371.2 L595.3,377.3 L597.8,363.7 L600.3,362.5 L603.0,356.3 L606.0,379.8 L608.4,374.9 L610.9,383.5 L613.4,392.2 L615.8,399.6 L618.3,399.6 L622.0,392.2 L625.7,384.7 L628.2,379.8 L630.7,387.2 L633.9,372.4 L636.9,379.8 L639.3,379.3 L641.8,397.1 L645.0,405.8 L648.0,394.6 L650.0,390.9 L651.7,394.6 L654.2,384.7 L657.9,367.4 L661.1,360.5 L663.3,360.5 L665.3,369.4 L668.5,367.4 L672.0,358.8 L675.2,366.2 L678.9,363.7 L680.9,365.0 L683.8,352.1 L685.8,358.8 L688.3,351.4 L691.2,352.6 L695.0,350.1 L697.4,363.7 L700.4,361.3 L703.6,377.3 L706.6,378.6 L709.0,376.8 L711.0,382.3 L713.5,394.6 L716.0,399.6 L716.0,431.5 L10.0,431.5Z" fill="#f23645" fill-opacity="0.12" clip-path="url(#cos)"/>
<g clip-path="url(#cr)" fill="none" stroke-linejoin="round" stroke-linecap="round">
<path d="M10.0,420.6 L12.5,434.2 L16.2,445.3 L19.9,433.0 L23.6,428.0 L27.3,426.8 L29.3,408.2 L31.0,416.9 L33.5,416.9 L36.0,397.1 L37.7,399.6 L40.2,387.2 L43.4,394.6 L47.1,392.2 L50.8,390.9 L54.0,387.2 L55.7,397.1 L59.4,400.8 L60.7,409.5 L63.2,426.3 L65.6,411.9 L67.4,415.7 L70.1,399.6 L73.0,398.3 L75.0,404.5 L78.0,392.2 L81.7,383.5 L85.4,369.9 L90.3,356.3 L95.3,347.7 L99.5,361.3 L102.7,352.6 L105.2,355.1 L107.7,350.1 L110.1,353.8 L113.8,346.4 L116.3,342.7 L118.8,344.0 L121.2,341.5 L123.7,342.7 L126.7,339.0 L128.2,338.3 L129.2,347.7 L131.6,382.3 L134.8,362.5 L137.3,379.8 L139.8,373.6 L143.5,367.4 L147.2,355.1 L150.9,348.9 L152.9,362.5 L155.1,378.6 L158.3,376.1 L163.3,373.6 L166.2,363.7 L169.5,369.9 L174.4,374.9 L178.1,365.0 L180.6,363.7 L182.6,377.3 L185.0,357.6 L188.0,354.6 L191.7,358.8 L194.2,351.4 L199.1,347.7 L200.0,342.7 L203.7,329.1 L207.4,347.7 L211.1,350.1 L213.6,352.6 L216.1,347.2 L217.8,350.1 L219.8,362.5 L223.5,356.3 L226.7,351.4 L229.2,377.3 L230.9,372.4 L234.6,369.9 L237.6,365.0 L239.6,373.6 L242.5,379.8 L245.2,383.5 L248.7,361.3 L251.9,393.4 L255.6,383.5 L258.8,382.3 L261.1,388.5 L264.8,381.0 L268.0,376.1 L271.7,362.5 L273.7,374.9 L276.6,397.1 L280.3,398.3 L283.6,400.8 L286.0,397.6 L288.5,402.1 L291.0,398.3 L292.7,413.2 L295.2,416.1 L298.9,414.9 L302.1,403.3 L305.1,413.2 L308.8,397.1 L312.5,384.7 L316.2,365.0 L320.6,361.3 L323.6,382.3 L327.6,395.9 L331.0,377.3 L333.5,374.9 L336.7,386.0 L338.9,377.3 L342.2,392.2 L344.6,399.1 L348.3,393.4 L352.0,393.4 L354.5,389.7 L357.7,400.8 L360.2,402.1 L363.2,393.4 L365.1,389.7 L367.6,380.5 L370.6,399.6 L374.3,421.3 L376.8,399.6 L379.7,396.6 L382.9,415.7 L386.7,432.2 L389.6,429.2 L392.1,417.4 L393.7,425.5 L396.2,427.3 L398.7,424.3 L401.9,426.8 L405.3,414.9 L408.5,418.1 L412.2,419.9 L415.2,420.6 L416.7,423.1 L419.7,412.4 L422.1,416.9 L424.6,415.7 L427.1,419.4 L430.8,392.2 L435.7,384.3 L437.5,391.4 L439.9,384.3 L441.9,388.5 L444.9,387.2 L448.1,393.4 L451.8,405.8 L453.8,407.0 L456.3,423.8 L458.7,423.1 L461.7,403.3 L463.4,401.6 L466.6,409.5 L469.6,418.1 L472.1,416.9 L475.3,421.8 L478.5,416.9 L482.0,416.9 L484.4,421.8 L486.4,420.6 L488.1,431.7 L492.6,434.9 L495.1,405.8 L500.0,399.6 L502.5,391.7 L505.5,391.7 L507.4,394.6 L509.4,394.1 L511.1,415.7 L513.6,402.1 L515.6,414.4 L517.3,405.0 L519.8,413.2 L523.0,415.7 L524.7,411.4 L526.7,392.2 L529.2,391.7 L530.4,395.1 L532.2,392.2 L534.1,397.1 L537.1,389.7 L540.8,382.8 L543.8,392.2 L546.2,377.3 L549.5,392.2 L552.7,407.0 L555.1,408.2 L559.3,387.2 L564.3,371.2 L568.5,362.0 L571.0,377.3 L574.2,379.3 L575.9,381.0 L577.9,387.7 L580.0,386.0 L582.5,384.7 L584.9,379.3 L587.4,382.8 L589.9,384.7 L591.9,372.4 L593.6,371.2 L595.3,377.3 L597.8,363.7 L600.3,362.5 L603.0,356.3 L606.0,379.8 L608.4,374.9 L610.9,383.5 L613.4,392.2 L615.8,399.6 L618.3,399.6 L622.0,392.2 L625.7,384.7 L628.2,379.8 L630.7,387.2 L633.9,372.4 L636.9,379.8 L639.3,379.3 L641.8,397.1 L645.0,405.8 L648.0,394.6 L650.0,390.9 L651.7,394.6 L654.2,384.7 L657.9,367.4 L661.1,360.5 L663.3,360.5 L665.3,369.4 L668.5,367.4 L672.0,358.8 L675.2,366.2 L678.9,363.7 L680.9,365.0 L683.8,352.1 L685.8,358.8 L688.3,351.4 L691.2,352.6 L695.0,350.1 L697.4,363.7 L700.4,361.3 L703.6,377.3 L706.6,378.6 L709.0,376.8 L711.0,382.3 L713.5,394.6 L716.0,399.6" stroke="#7e57c2" stroke-width="1.1"/>
<path d="M10.0,403.3 C11.6,406.6 11.2,407.4 14.9,413.2 C18.7,418.9 17.0,416.7 21.1,420.6 C25.2,424.5 23.2,422.6 27.3,424.8 C31.4,427.0 29.8,427.8 33.5,427.3 C37.2,426.7 35.1,426.1 38.4,423.1 C41.7,420.0 40.1,422.2 43.4,418.1 C46.7,414.0 45.0,415.7 48.3,410.7 C51.6,405.8 50.0,407.4 53.3,403.3 C56.6,399.2 54.9,400.0 58.2,398.3 C61.5,396.7 59.9,397.9 63.2,398.3 C66.4,398.8 64.4,398.5 68.1,399.6 C71.8,400.7 70.2,401.1 74.3,401.6 C78.4,402.0 76.7,402.3 80.5,400.8 C84.2,399.3 82.1,400.8 85.4,397.1 C88.7,393.4 87.0,395.5 90.3,389.7 C93.6,383.9 92.0,386.0 95.3,379.8 C98.6,373.6 96.9,376.5 100.2,371.2 C103.5,365.8 101.9,368.3 105.2,363.7 C108.5,359.2 106.8,361.3 110.1,357.6 C113.4,353.8 111.8,355.1 115.1,352.6 C118.4,350.1 116.7,351.4 120.0,350.1 C123.3,348.9 121.7,349.3 125.0,348.9 C128.3,348.5 126.6,348.1 129.9,348.9 C133.2,349.7 131.5,349.3 134.8,351.4 C138.1,353.4 136.5,353.2 139.8,355.1 C143.1,357.0 141.0,355.8 144.7,357.1 C148.4,358.3 147.2,356.6 150.9,358.8 C154.6,361.0 152.6,360.4 155.9,363.7 C159.2,367.0 157.5,367.2 160.8,368.7 C164.1,370.2 162.5,368.4 165.7,368.2 C169.0,368.0 167.4,368.0 170.7,368.2 C174.0,368.4 171.5,367.9 175.6,368.7 C179.8,369.5 178.9,371.1 183.1,370.7 C187.2,370.2 184.3,369.8 188.0,367.4 C191.7,365.1 190.2,366.2 194.2,363.7 C198.2,361.3 196.4,362.9 200.0,360.0 C203.6,357.1 201.6,357.7 204.9,355.1 C208.2,352.4 206.6,354.2 209.9,352.1 C213.2,350.1 211.5,350.0 214.8,348.9 C218.1,347.8 216.1,348.9 219.8,348.9 C223.5,348.9 222.2,347.7 226.0,348.9 C229.7,350.1 227.2,349.3 230.9,352.6 C234.6,355.9 233.0,354.7 237.1,358.8 C241.2,362.9 239.1,361.3 243.3,365.0 C247.4,368.7 245.3,366.5 249.4,369.9 C253.6,373.4 251.5,372.6 255.6,375.4 C259.7,378.1 257.7,376.6 261.8,378.1 C265.9,379.6 263.9,379.5 268.0,379.8 C272.1,380.1 270.5,378.2 274.2,379.1 C277.9,379.9 275.8,380.2 279.1,382.3 C282.4,384.3 280.8,383.6 284.1,385.2 C287.4,386.9 285.7,385.3 289.0,387.2 C292.3,389.1 290.6,388.0 293.9,390.9 C297.2,393.8 295.6,392.2 298.9,395.9 C302.2,399.6 300.9,399.0 303.8,402.1 C306.7,405.1 304.7,404.2 307.5,405.0 C310.4,405.8 309.2,405.9 312.5,404.5 C315.8,403.1 314.1,403.9 317.4,400.8 C320.7,397.7 319.1,398.4 322.4,395.1 C325.7,391.8 324.0,394.0 327.3,390.9 C330.6,387.9 329.0,389.3 332.3,386.0 C335.6,382.7 334.3,383.1 337.2,381.0 C340.1,379.0 338.0,379.2 340.9,379.8 C343.8,380.4 342.6,380.5 345.9,382.8 C349.2,385.1 347.5,384.4 350.8,386.7 C354.1,389.0 352.5,388.1 355.7,389.7 C359.0,391.3 356.6,390.4 360.7,391.4 C364.8,392.5 364.0,391.0 368.1,392.9 C372.2,394.8 369.3,395.5 373.1,397.1 C376.8,398.7 375.5,396.4 379.2,397.6 C382.9,398.8 380.9,398.1 384.2,400.8 C387.5,403.5 387.2,403.9 389.1,405.8 C391.1,407.7 388.1,404.4 390.0,406.5 C391.9,408.6 391.2,408.1 394.9,411.9 C398.7,415.8 397.0,415.2 401.1,418.1 C405.2,421.0 402.8,418.7 407.3,420.6 C411.8,422.5 410.2,423.6 414.7,423.8 C419.3,424.1 416.8,422.7 420.9,421.3 C425.0,420.0 423.0,422.6 427.1,419.9 C431.2,417.1 429.1,417.6 433.3,413.2 C437.4,408.7 435.3,410.6 439.4,406.5 C443.6,402.4 441.9,403.8 445.6,400.8 C449.3,397.9 447.3,398.8 450.6,397.6 C453.9,396.4 451.8,396.9 455.5,397.1 C459.2,397.4 458.0,396.9 461.7,398.3 C465.4,399.8 462.9,398.5 466.6,401.6 C470.3,404.6 468.7,403.6 472.8,407.5 C476.9,411.4 474.9,410.2 479.0,413.2 C483.1,416.1 481.1,414.5 485.2,416.4 C489.3,418.3 487.7,417.6 491.4,418.9 C495.1,420.1 493.0,420.3 496.3,420.1 C499.6,419.9 498.0,420.2 501.2,418.1 C504.5,416.1 502.9,416.4 506.2,413.9 C509.5,411.4 507.4,412.6 511.1,410.7 C514.8,408.8 513.2,410.3 517.3,408.2 C521.4,406.2 520.2,406.4 523.5,404.5 C526.8,402.6 523.9,403.4 527.2,402.5 C530.5,401.7 529.3,402.6 533.4,402.1 C537.5,401.5 535.9,402.1 539.6,400.8 C543.3,399.6 541.2,400.4 544.5,398.3 C547.8,396.3 545.7,396.5 549.5,394.6 C553.2,392.8 551.5,394.1 555.6,392.9 C559.8,391.7 557.7,393.2 561.8,390.9 C565.9,388.6 564.3,388.2 568.0,386.0 C571.7,383.8 569.2,384.8 572.9,384.3 C576.7,383.7 576.8,383.9 579.1,384.3 C581.5,384.6 577.6,386.6 580.0,385.2 C582.4,383.9 582.1,382.8 586.2,380.3 C590.3,377.8 587.8,378.8 592.4,377.8 C596.9,376.8 595.2,378.2 599.8,377.3 C604.3,376.5 602.2,376.0 606.0,375.4 C609.7,374.7 607.2,374.3 610.9,375.4 C614.6,376.4 612.6,376.7 617.1,378.6 C621.6,380.5 619.6,379.1 624.5,381.0 C629.4,382.9 627.0,382.4 631.9,384.3 C636.9,386.1 634.8,385.2 639.3,386.7 C643.9,388.3 641.4,388.5 645.5,389.0 C649.6,389.4 647.6,389.2 651.7,388.0 C655.8,386.7 653.8,387.3 657.9,385.2 C662.0,383.2 660.3,383.2 664.1,381.8 C667.8,380.4 665.3,382.9 669.0,381.0 C672.7,379.1 671.1,380.2 675.2,376.1 C679.3,372.0 677.2,373.0 681.4,368.7 C685.5,364.3 683.4,365.9 687.5,363.0 C691.7,360.1 689.6,361.3 693.7,360.0 C697.8,358.8 696.2,358.9 699.9,359.3 C703.6,359.7 701.5,359.8 704.8,361.3 C708.1,362.7 706.9,362.1 709.8,363.7 C712.7,365.4 711.4,364.1 713.5,366.2 C715.6,368.3 715.1,368.7 716.0,369.9" stroke="#fdd835" stroke-width="1.15"/>
</g>
<text x="748.4" y="59.3" fill="#c9c9c9" stroke="#c9c9c9" stroke-width="0.2" textLength="41.5" lengthAdjust="spacingAndGlyphs" xml:space="preserve">1.48000</text>
<text x="748.4" y="92.3" fill="#c9c9c9" stroke="#c9c9c9" stroke-width="0.2" textLength="41.5" lengthAdjust="spacingAndGlyphs" xml:space="preserve">1.46000</text>
<text x="748.4" y="125.3" fill="#c9c9c9" stroke="#c9c9c9" stroke-width="0.2" textLength="41.5" lengthAdjust="spacingAndGlyphs" xml:space="preserve">1.44000</text>
<text x="748.4" y="158.3" fill="#c9c9c9" stroke="#c9c9c9" stroke-width="0.2" textLength="41.5" lengthAdjust="spacingAndGlyphs" xml:space="preserve">1.42000</text>
<text x="748.4" y="191.3" fill="#c9c9c9" stroke="#c9c9c9" stroke-width="0.2" textLength="41.5" lengthAdjust="spacingAndGlyphs" xml:space="preserve">1.40000</text>
<text x="748.4" y="223.8" fill="#c9c9c9" stroke="#c9c9c9" stroke-width="0.2" textLength="41.5" lengthAdjust="spacingAndGlyphs" xml:space="preserve">1.38000</text>
<text x="748.4" y="256.8" fill="#c9c9c9" stroke="#c9c9c9" stroke-width="0.2" textLength="41.5" lengthAdjust="spacingAndGlyphs" xml:space="preserve">1.36000</text>
<text x="748.4" y="289.6" fill="#c9c9c9" stroke="#c9c9c9" stroke-width="0.2" textLength="41.5" lengthAdjust="spacingAndGlyphs" xml:space="preserve">1.34000</text>
<text x="748.4" y="335.8" fill="#c9c9c9" stroke="#c9c9c9" stroke-width="0.2" textLength="29.5" lengthAdjust="spacingAndGlyphs" xml:space="preserve">80.00</text>
<text x="748.4" y="375.8" fill="#c9c9c9" stroke="#c9c9c9" stroke-width="0.2" textLength="29.5" lengthAdjust="spacingAndGlyphs" xml:space="preserve">60.00</text>
<text x="748.4" y="415.8" fill="#c9c9c9" stroke="#c9c9c9" stroke-width="0.2" textLength="29.5" lengthAdjust="spacingAndGlyphs" xml:space="preserve">40.00</text>
<text x="748.4" y="454.90000000000003" fill="#c9c9c9" stroke="#c9c9c9" stroke-width="0.2" textLength="29.5" lengthAdjust="spacingAndGlyphs" xml:space="preserve">20.00</text>
<rect x="741" y="155" width="55" height="17" rx="1.5" fill="#f23645"/>
<text x="748.3" y="167.8" fill="#ffffff" stroke="#ffffff" stroke-width="0.35" textLength="41.5" lengthAdjust="spacingAndGlyphs" xml:space="preserve">1.40718</text>
<rect x="741" y="172" width="55" height="17" rx="1.5" fill="#2962ff"/>
<text x="748.3" y="184.8" fill="#ffffff" stroke="#ffffff" stroke-width="0.35" textLength="41.5" lengthAdjust="spacingAndGlyphs" xml:space="preserve">1.39953</text>
<rect x="741" y="189" width="55" height="17" rx="1.5" fill="#f23645"/>
<text x="748.3" y="201.8" fill="#ffffff" stroke="#ffffff" stroke-width="0.35" textLength="41.5" lengthAdjust="spacingAndGlyphs" xml:space="preserve">1.39370</text>
<rect x="741" y="206" width="55" height="17" rx="1.5" fill="#089981"/>
<text x="748.3" y="218.8" fill="#ffffff" stroke="#ffffff" stroke-width="0.35" textLength="41.5" lengthAdjust="spacingAndGlyphs" xml:space="preserve">1.39189</text>
<path d="M741,314 V299.5 Q741,298 742.5,298 H790.5 Q792,298 792,299.5 V314 Z" fill="#ef5350"/>
<text y="310.3" fill="#ffffff" stroke="#ffffff" stroke-width="0.35"><tspan x="748.3" textLength="27.9" lengthAdjust="spacingAndGlyphs">29.48</tspan> <tspan x="779.9" textLength="6.1" lengthAdjust="spacingAndGlyphs">K</tspan></text>
<rect x="741" y="361" width="42" height="17" rx="1.5" fill="#fdd835"/>
<text x="748.3" y="373.8" fill="#131313" stroke="#131313" stroke-width="0.35" textLength="29.3" lengthAdjust="spacingAndGlyphs" xml:space="preserve">60.76</text>
<rect x="741" y="392" width="42" height="17" rx="1.5" fill="#7e57c2"/>
<text x="748.3" y="404.8" fill="#ffffff" stroke="#ffffff" stroke-width="0.35" textLength="29.3" lengthAdjust="spacingAndGlyphs" xml:space="preserve">45.56</text>
<text x="26.8" y="476" fill="#c9c9c9" text-anchor="middle" stroke="#c9c9c9" stroke-width="0.2" textLength="19" lengthAdjust="spacingAndGlyphs" xml:space="preserve">Sep</text>
<text x="127.9" y="476" fill="#c9c9c9" text-anchor="middle" stroke="#c9c9c9" stroke-width="0.2" textLength="20.5" lengthAdjust="spacingAndGlyphs" xml:space="preserve">Nov</text>
<text x="224.2" y="476" fill="#c9c9c9" font-weight="bold" text-anchor="middle" textLength="27.3" lengthAdjust="spacingAndGlyphs" xml:space="preserve">2025</text>
<text x="320.7" y="476" fill="#c9c9c9" text-anchor="middle" stroke="#c9c9c9" stroke-width="0.2" textLength="20" lengthAdjust="spacingAndGlyphs" xml:space="preserve">Mar</text>
<text x="419.3" y="476" fill="#c9c9c9" text-anchor="middle" stroke="#c9c9c9" stroke-width="0.2" textLength="20.7" lengthAdjust="spacingAndGlyphs" xml:space="preserve">May</text>
<text x="518.2" y="476" fill="#c9c9c9" text-anchor="middle" stroke="#c9c9c9" stroke-width="0.2" textLength="15.4" lengthAdjust="spacingAndGlyphs" xml:space="preserve">Jul</text>
<text x="619.3" y="476" fill="#c9c9c9" text-anchor="middle" stroke="#c9c9c9" stroke-width="0.2" textLength="19" lengthAdjust="spacingAndGlyphs" xml:space="preserve">Sep</text>
<text x="723" y="476" fill="#c9c9c9" text-anchor="middle" stroke="#c9c9c9" stroke-width="0.2" textLength="20.5" lengthAdjust="spacingAndGlyphs" xml:space="preserve">Nov</text>
<text y="45.8" fill="#cacaca" stroke="#cacaca" stroke-width="0.2"><tspan x="18.1" textLength="21.0" lengthAdjust="spacingAndGlyphs">U.S.</tspan> <tspan x="44.2" textLength="31.0" lengthAdjust="spacingAndGlyphs">Dollar</tspan> <tspan x="82.7">/</tspan> <tspan x="89.9" textLength="48.4" lengthAdjust="spacingAndGlyphs">Canadian</tspan> <tspan x="143.4" textLength="30.6" lengthAdjust="spacingAndGlyphs">Dollar</tspan> <tspan x="177.7">·</tspan> <tspan x="187.3" textLength="12.8" lengthAdjust="spacingAndGlyphs">1D</tspan> <tspan x="203.7">·</tspan> <tspan x="211.4" textLength="37.0" lengthAdjust="spacingAndGlyphs">OANDA</tspan> <tspan x="256" textLength="7.7" lengthAdjust="spacingAndGlyphs">O</tspan> <tspan x="264.7" textLength="40.2" lengthAdjust="spacingAndGlyphs" fill="#f23645" stroke="#f23645">1.39472</tspan> <tspan x="313.2" textLength="7.5" lengthAdjust="spacingAndGlyphs">H</tspan> <tspan x="321.8" textLength="41.0" lengthAdjust="spacingAndGlyphs" fill="#f23645" stroke="#f23645">1.39474</tspan> <tspan x="370.9" textLength="5.4" lengthAdjust="spacingAndGlyphs">L</tspan> <tspan x="377.2" textLength="41.1" lengthAdjust="spacingAndGlyphs" fill="#f23645" stroke="#f23645">1.39322</tspan> <tspan x="426.5" textLength="7.0" lengthAdjust="spacingAndGlyphs">C</tspan> <tspan x="434.5" textLength="39.9" lengthAdjust="spacingAndGlyphs" fill="#f23645" stroke="#f23645">1.39370</tspan> <tspan x="483.3" textLength="46.7" lengthAdjust="spacingAndGlyphs" fill="#f23645" stroke="#f23645">−0.00090</tspan> <tspan x="535" textLength="44.0" lengthAdjust="spacingAndGlyphs" fill="#f23645" stroke="#f23645">(−0.06%)</tspan></text>
<text y="62.8" fill="#cacaca" stroke="#cacaca" stroke-width="0.2"><tspan x="18.1" textLength="15.9" lengthAdjust="spacingAndGlyphs">Vol</tspan> <tspan x="38.3">·</tspan> <tspan x="46.7" textLength="25.4" lengthAdjust="spacingAndGlyphs">Ticks</tspan> <tspan x="80.3" textLength="27.9" lengthAdjust="spacingAndGlyphs" fill="#ef5350" stroke="#ef5350">29.48</tspan> <tspan x="111.9" textLength="6.1" lengthAdjust="spacingAndGlyphs" fill="#ef5350" stroke="#ef5350">K</tspan></text>
<text y="79.6" fill="#cacaca" stroke="#cacaca" stroke-width="0.2"><tspan x="18.1" textLength="12.9" lengthAdjust="spacingAndGlyphs">BB</tspan> <tspan x="36.1" textLength="19.7" lengthAdjust="spacingAndGlyphs">(20,</tspan> <tspan x="59.9" textLength="24.5" lengthAdjust="spacingAndGlyphs">SMA,</tspan> <tspan x="89" textLength="30.0" lengthAdjust="spacingAndGlyphs">close,</tspan> <tspan x="124.1" textLength="10.6" lengthAdjust="spacingAndGlyphs">2)</tspan> <tspan x="143.4" textLength="40.6" lengthAdjust="spacingAndGlyphs" fill="#2962ff" stroke="#2962ff">1.39953</tspan> <tspan x="193" textLength="41.0" lengthAdjust="spacingAndGlyphs" fill="#f23645" stroke="#f23645">1.40718</tspan> <tspan x="243" textLength="40.3" lengthAdjust="spacingAndGlyphs" fill="#089981" stroke="#089981">1.39189</tspan></text>
<text y="333.9" fill="#cacaca" stroke="#cacaca" stroke-width="0.2"><tspan x="18.1" textLength="15.9" lengthAdjust="spacingAndGlyphs">RSI</tspan> <tspan x="38.5" textLength="20.0" lengthAdjust="spacingAndGlyphs">(14,</tspan> <tspan x="62.6" textLength="30.9" lengthAdjust="spacingAndGlyphs">close)</tspan> <tspan x="102.1" textLength="28.5" lengthAdjust="spacingAndGlyphs" fill="#7e57c2" stroke="#7e57c2">45.56</tspan></text>
<text x="138.3" y="333.9" fill="#fdd835" font-weight="bold" textLength="29.6" lengthAdjust="spacingAndGlyphs" xml:space="preserve">60.76</text>
<text y="19.2" fill="#d6d6d6" stroke="#d6d6d6" stroke-width="0.45"><tspan x="10.2" textLength="40.7" lengthAdjust="spacingAndGlyphs">Created</tspan> <tspan x="56.4" textLength="22.6" lengthAdjust="spacingAndGlyphs">with</tspan> <tspan x="83.5" textLength="94.8" lengthAdjust="spacingAndGlyphs">TradingView.com,</tspan> <tspan x="182.4" textLength="18.3" lengthAdjust="spacingAndGlyphs">Oct</tspan> <tspan x="205.2" textLength="15.5" lengthAdjust="spacingAndGlyphs">29,</tspan> <tspan x="225.6" textLength="24.0" lengthAdjust="spacingAndGlyphs">2025</tspan> <tspan x="254.3" textLength="28.5" lengthAdjust="spacingAndGlyphs">02:32</tspan> <tspan x="287.3" textLength="32.0" lengthAdjust="spacingAndGlyphs">UTC-4</tspan></text>
<g fill="#e0e0e0">
<path d="M12,508 H24 V523 H18 V514.6 H12 Z"/>
<circle cx="29.3" cy="511.2" r="3.1"/>
<path d="M33.6,508 H41.5 L36.7,523 H29.3 Z"/>
</g>
<text x="49" y="523" fill="#e0e0e0" font-size="21" stroke="#e0e0e0" stroke-width="0.9" textLength="120.5" lengthAdjust="spacingAndGlyphs" xml:space="preserve">TradingView</text>
</svg>
</body></html>
